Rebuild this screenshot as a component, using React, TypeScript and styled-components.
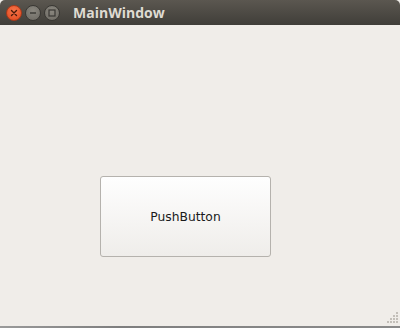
import React from "react";
import styled, { createGlobalStyle } from "styled-components";

const Global = createGlobalStyle`
  html, body { margin: 0; padding: 0; width: 400px; height: 328px; overflow: hidden; }
  #root { width: 400px; height: 328px; }
`;

const Window = styled.div`
  width: 400px;
  height: 328px;
  display: flex;
  flex-direction: column;
  background: #f0ede9;
`;

const TitleBar = styled.div`
  height: 25px;
  flex: none;
  display: flex;
  align-items: center;
  padding-left: 6px;
  background: linear-gradient(#5b5750, #403e39);
  border-radius: 5px 5px 0 0;
`;

const Controls = styled.div`
  display: flex;
  align-items: center;
  gap: 3px;
`;

const CircleBtn = styled.div<{ $close?: boolean }>`
  width: 16px;
  height: 16px;
  border-radius: 50%;
  display: flex;
  align-items: center;
  justify-content: center;
  box-sizing: border-box;
  background: ${(p) =>
    p.$close
      ? "radial-gradient(circle at 50% 35%, #f6764b, #e0461c)"
      : "radial-gradient(circle at 50% 35%, #8a877f, #6c6962)"};
  border: 1px solid ${(p) => (p.$close ? "#a9391a" : "#3a3834")};
`;

const Title = styled.div`
  margin-left: 13px;
  font-family: "Open Sans", sans-serif;
  font-weight: bold;
  font-size: 14px;
  color: #dfdbd2;
`;

const Content = styled.div`
  flex: 1;
  display: flex;
  flex-direction: column;
  align-items: flex-start;
  padding: 151px 0 0 100px;
  box-sizing: border-box;
  position: relative;
`;

const PushButton = styled.button`
  width: 171px;
  height: 81px;
  border: 1px solid #b5b2ad;
  border-radius: 3px;
  background: linear-gradient(#fefefe, #efedea);
  font-family: "DejaVu Sans", sans-serif;
  font-size: 12.3px;
  color: #1a1a1a;
  padding: 0;
  cursor: pointer;
`;

const Grip = styled.svg`
  position: absolute;
  right: 1px;
  bottom: 2px;
`;

const BottomStrip = styled.div`
  height: 2px;
  flex: none;
  background: linear-gradient(90deg, #9a9a9a, #7e7e7e 30%, #858585 60%, #8a8a8a);
`;

export default function App() {
  const dots: [number, number][] = [];
  for (let r = 0; r < 4; r++) {
    for (let c = 3 - r; c < 4; c++) {
      dots.push([c * 3, r * 3]);
    }
  }
  return (
    <>
      <Global />
      <Window>
        <TitleBar>
          <Controls>
            <CircleBtn $close>
              <svg width="8" height="8" viewBox="0 0 8 8">
                <path d="M1.5 1.5L6.5 6.5M6.5 1.5L1.5 6.5" stroke="#4a1a0a" strokeWidth="1.4" strokeLinecap="round" />
              </svg>
            </CircleBtn>
            <CircleBtn>
              <svg width="8" height="8" viewBox="0 0 8 8">
                <path d="M1 4H7" stroke="#3a3834" strokeWidth="1.4" />
              </svg>
            </CircleBtn>
            <CircleBtn>
              <svg width="8" height="8" viewBox="0 0 8 8">
                <rect x="1" y="1" width="6" height="6" fill="none" stroke="#3a3834" strokeWidth="1.2" />
              </svg>
            </CircleBtn>
          </Controls>
          <Title>MainWindow</Title>
        </TitleBar>
        <Content>
          <PushButton>PushButton</PushButton>
          <Grip width="12" height="12" viewBox="0 0 12 12">
            {dots.map(([x, y], i) => (
              <rect key={i} x={x} y={y} width="2" height="2" fill="#c3bfb9" />
            ))}
          </Grip>
        </Content>
        <BottomStrip />
      </Window>
    </>
  );
}
